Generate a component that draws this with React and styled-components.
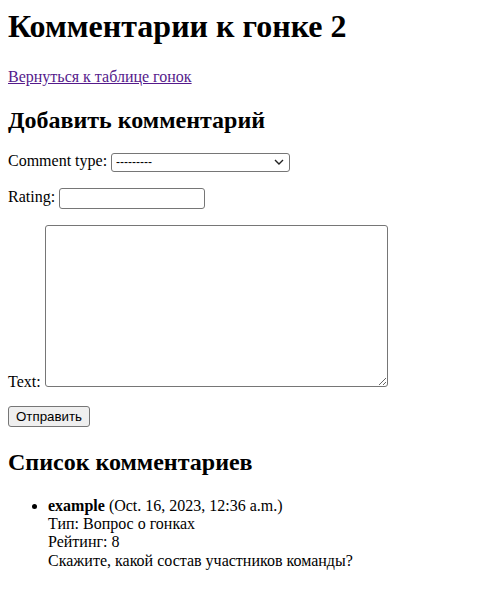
import React from "react";
import styled, { createGlobalStyle } from "styled-components";

const GlobalStyle = createGlobalStyle`
  body {
    margin: 8px;
    background: #fff;
    color: #000;
    font-family: "Liberation Serif", "Times New Roman", serif;
    font-size: 16px;
    line-height: 1.15;
  }
`;

const Title = styled.h1`
  font-size: 32px;
  font-weight: bold;
  margin: 0 0 23.44px;
`;

const SubTitle = styled.h2`
  font-size: 24px;
  font-weight: bold;
  margin: 19.92px 0 ${(p) => (p.$tight ? "17.92px" : "19.92px")};
`;

const Para = styled.p`
  margin: 16px 0;
`;

const CommentForm = styled.form`
  padding-bottom: 2px;
`;

const FormPara = styled.p`
  margin: 16px 0;
  &:first-child {
    margin-top: 0;
  }
`;

const BackLink = styled.a`
  color: #551a8b;
  text-decoration: underline;
`;

const SelectWrap = styled.span`
  position: relative;
  display: inline-block;
  vertical-align: middle;
`;

const Select = styled.select`
  appearance: none;
  width: 179px;
  height: 19px;
  box-sizing: border-box;
  border: 1px solid #767676;
  border-radius: 3px;
  background: #fff;
  padding: 0 20px 0 4px;
  font-family: "Liberation Sans", Arial, sans-serif;
  font-size: 12px;
  color: #000;
  display: block;
`;

const Chevron = styled.svg`
  position: absolute;
  right: 6px;
  top: 5px;
  pointer-events: none;
`;

const NumberInput = styled.input`
  width: 146px;
  height: 21px;
  box-sizing: border-box;
  border: 1px solid #767676;
  border-radius: 3px;
  padding: 1px 2px;
  vertical-align: middle;
`;

const TextArea = styled.textarea`
  width: 343px;
  height: 162px;
  box-sizing: border-box;
  border: 1px solid #767676;
  border-radius: 3px;
  margin: 0;
  vertical-align: baseline;
  font-family: "Liberation Mono", monospace;
  font-size: 13px;
`;

const SubmitButton = styled.button`
  width: 82px;
  height: 21px;
  margin-top: -1px;
  box-sizing: border-box;
  border: 1px solid #767676;
  border-radius: 3px;
  background: #efefef;
  font-family: "Liberation Sans", Arial, sans-serif;
  font-size: 13.3px;
  color: #000;
  padding: 0 6px;
  display: block;
`;

const CommentList = styled.ul`
  margin: 16px 0;
  padding-left: 40px;
  list-style: disc;
`;

const CommentItem = styled.li`
  line-height: 18.4px;
`;

const comments = [
  {
    id: 1,
    author: "example",
    date: "Oct. 16, 2023, 12:36 a.m.",
    type: "Вопрос о гонках",
    rating: 8,
    text: "Скажите, какой состав участников команды?",
  },
];

const App = () => {
  return (
    <>
      <GlobalStyle />
      <Title>Комментарии к гонке 2</Title>
      <Para>
        <BackLink href="#">Вернуться к таблице гонок</BackLink>
      </Para>
      <SubTitle $tight>Добавить комментарий</SubTitle>
      <CommentForm onSubmit={(e) => e.preventDefault()}>
        <FormPara>
          <label htmlFor="id_type">Comment type:</label>{" "}
          <SelectWrap>
            <Select id="id_type" defaultValue="">
              <option value="">---------</option>
            </Select>
            <Chevron width="10" height="8" viewBox="0 0 10 8">
              <path d="M1 2l4 4 4-4" fill="none" stroke="#222" strokeWidth="1.4" />
            </Chevron>
          </SelectWrap>
        </FormPara>
        <FormPara>
          <label htmlFor="id_rating">Rating:</label>{" "}
          <NumberInput id="id_rating" type="text" />
        </FormPara>
        <FormPara>
          <label htmlFor="id_text">Text:</label> <TextArea id="id_text" />
        </FormPara>
        <SubmitButton type="submit">Отправить</SubmitButton>
      </CommentForm>
      <SubTitle>Список комментариев</SubTitle>
      <CommentList>
        {comments.map((c) => (
          <CommentItem key={c.id}>
            <strong>{c.author}</strong> ({c.date})<br />
            Тип: {c.type}
            <br />
            Рейтинг: {c.rating}
            <br />
            {c.text}
          </CommentItem>
        ))}
      </CommentList>
    </>
  );
};

export default App;
